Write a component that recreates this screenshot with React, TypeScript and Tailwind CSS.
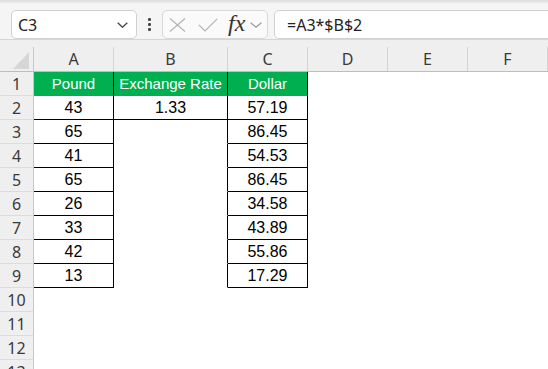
import React from "react";

const ui = { fontFamily: '"Noto Sans", "Liberation Sans", sans-serif' };
const cellFont = { fontFamily: '"Liberation Sans", Arial, sans-serif' };

type Cell = { v?: string; green?: boolean; r?: boolean; b?: boolean };

const colW = ["w-[80px]", "w-[114px]", "w-[80px]", "w-[80px]", "w-[80px]", "w-[80px]"];
const letters = ["A", "B", "C", "D", "E", "F"];

const aVals = ["43", "65", "41", "65", "26", "33", "42", "13"];
const cVals = ["57.19", "86.45", "54.53", "86.45", "34.58", "43.89", "55.86", "17.29"];

function buildRow(r: number): Cell[] {
  const cells: Cell[] = [];
  for (let c = 0; c < 6; c++) cells.push({});
  if (r === 1) {
    cells[0] = { v: "Pound", green: true, r: true };
    cells[1] = { v: "Exchange Rate", green: true, r: true };
    cells[2] = { v: "Dollar", green: true, r: true };
  } else if (r >= 2 && r <= 9) {
    cells[0] = { v: aVals[r - 2], r: true, b: true };
    cells[1] = r === 2 ? { v: "1.33", r: true, b: true } : { r: true };
    cells[2] = { v: cVals[r - 2], r: true, b: true };
  }
  return cells;
}

export default function App() {
  const rows = Array.from({ length: 13 }, (_, i) => i + 1);
  return (
    <div className="w-[548px] h-[369px] overflow-hidden bg-white flex flex-col" style={ui}>
      {/* Formula bar */}
      <div className="h-[40px] shrink-0 bg-[#f5f5f5] border-b border-[#d6d6d6] flex flex-col">
        <div className="h-[3px] bg-gradient-to-b from-[#dcdcdc] to-[#ececec]" />
        <div className="mt-[7px] h-[29px] flex items-center">
          <div className="ml-[11px] w-[126px] h-[29px] shrink-0 rounded-[5px] border border-[#d1d1d1] bg-white flex items-center justify-between pl-[6px] pr-[8px]">
            <span className="text-[16px] text-[#222] leading-none">C3</span>
            <svg width="11" height="6" viewBox="0 0 11 6">
              <polyline points="0.7,0.7 5.5,5.2 10.3,0.7" fill="none" stroke="#444" strokeWidth="1.3" />
            </svg>
          </div>
          <div className="ml-[11px] w-[4px] flex flex-col items-center gap-[2px]">
            <div className="w-[3px] h-[3px] rounded-[1px] bg-[#4a4a4a]" />
            <div className="w-[3px] h-[3px] rounded-[1px] bg-[#4a4a4a]" />
            <div className="w-[3px] h-[3px] rounded-[1px] bg-[#4a4a4a]" />
          </div>
          <div className="ml-[11px] w-[106px] h-[29px] shrink-0 rounded-[5px] border border-[#d9d9d9] bg-[#fafafa] flex items-center pl-[6px]">
            <svg width="17" height="14" viewBox="0 0 17 14">
              <line x1="1" y1="0.5" x2="16" y2="13.5" stroke="#b3b3b3" strokeWidth="1.2" />
              <line x1="16" y1="0.5" x2="1" y2="13.5" stroke="#b3b3b3" strokeWidth="1.2" />
            </svg>
            <svg className="ml-[12px]" width="20" height="14" viewBox="0 0 20 14">
              <polyline points="0.8,6.8 7,13 19.2,0.8" fill="none" stroke="#b3b3b3" strokeWidth="1.2" />
            </svg>
            <span
              className="ml-[10px] text-[24px] italic leading-none text-[#333] -mt-[3px]"
              style={{ fontFamily: '"Liberation Serif", "Times New Roman", serif' }}
            >
              fx
            </span>
            <svg className="ml-[5px]" width="12" height="6" viewBox="0 0 12 6">
              <polyline points="0.7,0.7 6,5.2 11.3,0.7" fill="none" stroke="#9a9a9a" strokeWidth="1.2" />
            </svg>
          </div>
          <div className="ml-[6px] w-[300px] h-[29px] shrink-0 rounded-[5px] border border-[#d1d1d1] bg-white flex items-center pl-[12px]">
            <span className="text-[16px] text-[#222] leading-none">=A3*$B$2</span>
          </div>
        </div>
      </div>

      {/* Column headers */}
      <div className="h-[32px] shrink-0 bg-[#efefef] border-b border-[#bdbdbd] flex">
        <div className="w-[34px] shrink-0 flex flex-col justify-end">
          <div className="h-[24px] border-r border-[#c8c8c8] flex items-end justify-end pr-[3px] pb-[2px]">
            <svg width="17" height="17" viewBox="0 0 17 17">
              <polygon points="16,0 16,17 0,17" fill="#d6d6d6" />
            </svg>
          </div>
        </div>
        {letters.map((l, i) => (
          <div key={l} className={`${colW[i]} shrink-0 flex flex-col justify-end`}>
            <div className="h-[24px] border-r border-[#d4d4d4] flex items-center justify-center text-[16px] text-[#3a3a3a] leading-none">
              {l}
            </div>
          </div>
        ))}
      </div>

      {/* Rows */}
      {rows.map((r) => {
        const cells = buildRow(r);
        return (
          <div key={r} className="h-[24px] shrink-0 flex">
            <div className="w-[34px] shrink-0 h-[24px] bg-[#efefef] border-r border-b border-r-[#c8c8c8] border-b-[#dcdcdc] flex items-center justify-center text-[16px] text-[#3a3a3a] leading-none">
              {r}
            </div>
            {cells.map((c, i) => (
              <div
                key={i}
                className={`${colW[i]} shrink-0 h-[24px] border-r border-b flex items-center justify-center leading-none ${
                  c.r ? "border-r-black" : "border-r-transparent"
                } ${c.b ? "border-b-black" : "border-b-transparent"} ${
                  c.green ? "bg-[#00b050] text-white text-[15px]" : "text-black text-[16px]"
                }`}
                style={cellFont}
              >
                {c.v ?? ""}
              </div>
            ))}
          </div>
        );
      })}
    </div>
  );
}
